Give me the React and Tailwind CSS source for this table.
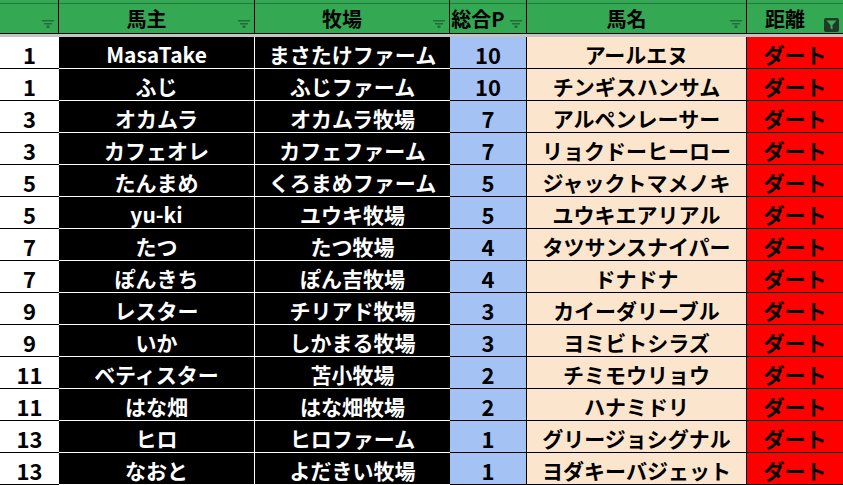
const rows = [
  ['1', 'MasaTake', 'まさたけファーム', '10', 'アールエヌ'],
  ['1', 'ふじ', 'ふじファーム', '10', 'チンギスハンサム'],
  ['3', 'オカムラ', 'オカムラ牧場', '7', 'アルペンレーサー'],
  ['3', 'カフェオレ', 'カフェファーム', '7', 'リョクドーヒーロー'],
  ['5', 'たんまめ', 'くろまめファーム', '5', 'ジャックトマメノキ'],
  ['5', 'yu-ki', 'ユウキ牧場', '5', 'ユウキエアリアル'],
  ['7', 'たつ', 'たつ牧場', '4', 'タツサンスナイパー'],
  ['7', 'ぽんきち', 'ぽん吉牧場', '4', 'ドナドナ'],
  ['9', 'レスター', 'チリアド牧場', '3', 'カイーダリーブル'],
  ['9', 'いか', 'しかまる牧場', '3', 'ヨミビトシラズ'],
  ['11', 'ベティスター', '苫小牧場', '2', 'チミモウリョウ'],
  ['11', 'はな畑', 'はな畑牧場', '2', 'ハナミドリ'],
  ['13', 'ヒロ', 'ヒロファーム', '1', 'グリージョシグナル'],
  ['13', 'なおと', 'よだきい牧場', '1', 'ヨダキーバジェット'],
];

const FilterIcon = () => (
  <svg width="12" height="8" viewBox="0 0 12 8" fill="#1f6e37">
    <rect x="0" y="0" width="12" height="1.5" />
    <rect x="2" y="3" width="8" height="1.5" />
    <rect x="4.5" y="5.5" width="3" height="2.5" />
  </svg>
);

const ActiveFilter = () => (
  <div className="w-[15px] h-[14px] rounded-[2px] bg-[#1f3b28] flex items-center justify-center">
    <svg width="11" height="10" viewBox="0 0 11 10" fill="#3fae5c">
      <path d="M0.5 0.5 H10.5 L6.5 5 V9.5 L4.5 8.3 V5 Z" />
    </svg>
  </div>
);

const HeaderCell = ({ label, active, last }) => (
  <div className={`h-[34px] border-b border-black ${last ? '' : 'border-r'}`}>
    <div className="relative mt-[3px] h-[30px] border-t border-[#1f7a3d] flex items-center pr-[20px]">
      <span className="flex-1 text-center text-[20px] leading-none font-bold text-black whitespace-nowrap pt-[1px]">
        {label}
      </span>
      <div className={`absolute right-[4px] ${active ? 'top-[14px]' : 'top-[16px]'}`}>
        {active ? <ActiveFilter /> : <FilterIcon />}
      </div>
    </div>
  </div>
);

const cell = 'h-8 flex items-center justify-center whitespace-nowrap text-[21px] font-bold leading-none border-b pt-[3px]';
const num = 'h-8 flex items-center justify-center whitespace-nowrap text-[22px] font-bold leading-none border-b pt-[2px]';

export default function App() {
  return (
    <div
      className="w-[843px] h-[485px] overflow-hidden bg-white"
      style={{ fontFamily: '"Noto Sans CJK JP", "Noto Sans", sans-serif' }}
    >
      <div className="grid grid-cols-[59px_196px_195px_77px_220px_96px] bg-[#34a853] border-black">
        <HeaderCell label="" />
        <HeaderCell label="馬主" />
        <HeaderCell label="牧場" />
        <HeaderCell label="総合P" />
        <HeaderCell label="馬名" />
        <HeaderCell label="距離" active last />
      </div>
      <div className="h-[3px] bg-[#c4c4c4]" />
      <div className="grid grid-cols-[59px_196px_195px_77px_220px_96px]">
        {rows.map((r, i) => (
          <div key={i} className="contents">
            <div className={`${num} bg-white text-black border-black`}>{r[0]}</div>
            <div className={`${cell} bg-black text-white border-white border-r`}>{r[1]}</div>
            <div className={`${cell} bg-black text-white border-white`}>{r[2]}</div>
            <div className={`${num} bg-[#a4c2f4] text-black border-black border-r`}>{r[3]}</div>
            <div className={`${cell} bg-[#fce5cd] text-black border-black border-r`}>{r[4]}</div>
            <div className={`${cell} bg-[#ff0000] text-black border-black`}>ダート</div>
          </div>
        ))}
      </div>
    </div>
  );
}
